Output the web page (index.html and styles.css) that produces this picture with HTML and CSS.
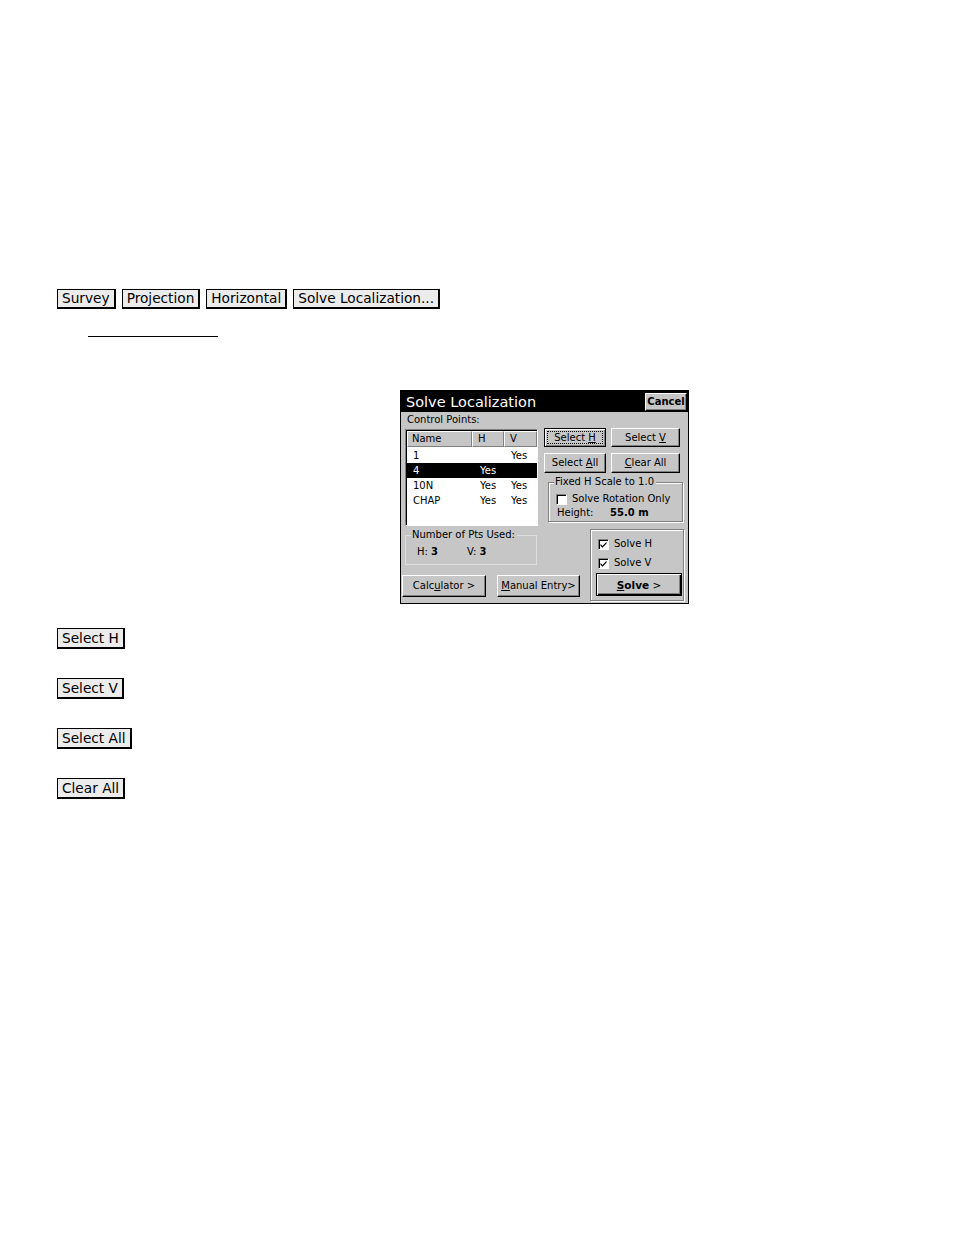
FILE: index.html
```html
<!DOCTYPE html>
<html>
<head>
<meta charset="utf-8">
<link rel="stylesheet" href="styles.css">
</head>
<body>
<div class="page">
  <div class="crumbs">
    <span class="crumb">Survey</span>
    <span class="crumb">Projection</span>
    <span class="crumb">Horizontal</span>
    <span class="crumb">Solve Localization...</span>
  </div>
  <div class="rule"></div>

  <div class="dialog">
    <div class="titlebar">
      <span class="title">Solve Localization</span>
      <span class="cancel">Cancel</span>
    </div>
    <div class="top">
      <div class="leftcol">
        <div class="lbl">Control Points:</div>
        <div class="list">
          <div class="lhead">
            <span class="hc c1">Name</span><span class="hc c2">H</span><span class="hc c3">V</span>
          </div>
          <div class="lrow"><span class="rc c1">1</span><span class="rc c2"></span><span class="rc c3">Yes</span></div>
          <div class="lrow sel"><span class="rc c1">4</span><span class="rc c2">Yes</span><span class="rc c3"></span></div>
          <div class="lrow"><span class="rc c1">10N</span><span class="rc c2">Yes</span><span class="rc c3">Yes</span></div>
          <div class="lrow"><span class="rc c1">CHAP</span><span class="rc c2">Yes</span><span class="rc c3">Yes</span></div>
        </div>
      </div>
      <div class="rightcol">
        <div class="btnrow r1">
          <span class="wb focus w62"><span class="dots"><span>Select <u>H</u></span></span></span>
          <span class="wb w69"><span>Select <u>V</u></span></span>
        </div>
        <div class="btnrow r2">
          <span class="wb w62"><span>Select <u>A</u>ll</span></span>
          <span class="wb w69"><span><u>C</u>lear All</span></span>
        </div>
        <div class="group g-fixed">
          <span class="glabel">Fixed H Scale to 1.0</span>
          <div class="chkline"><span class="chk"></span><span>Solve Rotation Only</span></div>
          <div class="hline"><span class="hl">Height:</span><b>55.0 m</b></div>
        </div>
      </div>
    </div>
    <div class="bottom">
      <div class="bleft">
        <div class="group g-num">
          <span class="glabel">Number of Pts Used:</span>
          <div class="counts"><span class="ch">H: <b>3</b></span><span>V: <b>3</b></span></div>
        </div>
        <div class="brow">
          <span class="wb w84"><span>Calc<u>u</u>lator &gt;</span></span>
          <span class="wb w83"><span><u>M</u>anual Entry&gt;</span></span>
        </div>
      </div>
      <div class="group g-solve">
        <div class="chkline s1"><span class="chk on"><svg viewBox="0 0 9 9" width="9" height="9"><path d="M1.5 4 L3.5 6 L7.5 1.8 L7.5 3.6 L3.5 7.8 L1.5 5.8 Z" fill="#000"/></svg></span><span>Solve H</span></div>
        <div class="chkline s2"><span class="chk on"><svg viewBox="0 0 9 9" width="9" height="9"><path d="M1.5 4 L3.5 6 L7.5 1.8 L7.5 3.6 L3.5 7.8 L1.5 5.8 Z" fill="#000"/></svg></span><span>Solve V</span></div>
        <span class="wb def"><span><b><u>S</u>olve</b>&nbsp;&gt;</span></span>
      </div>
    </div>
  </div>

  <div class="keys">
    <span class="crumb">Select H</span>
    <span class="crumb">Select V</span>
    <span class="crumb">Select All</span>
    <span class="crumb">Clear All</span>
  </div>
</div>
</body>
</html>
```

FILE: styles.css
```css
* { box-sizing: border-box; }
html, body { margin: 0; padding: 0; background: #fff; }
body { font-family: "DejaVu Sans", sans-serif; color: #000; }
.page { width: 954px; height: 1235px; padding-top: 289px; }

.crumbs { display: flex; gap: 6px; margin-left: 57px; }
.crumb {
  display: inline-block;
  height: 20px;
  line-height: 17px;
  font-size: 13.7px;
  padding: 0 4px 0 4px;
  background: #ececec;
  border: 1px solid #000;
  border-right-width: 2px;
  border-bottom-width: 2px;
  white-space: nowrap;
}
.rule { width: 130px; margin: 27px 0 0 88px; border-top: 1px solid #000; }

/* dialog */
.dialog {
  margin: 53px 0 0 400px;
  width: 289px;
  height: 214px;
  background: #c6c6c6;
  border: 1px solid #000;
  font-size: 10px;
  line-height: 12px;
}
.titlebar {
  height: 21px;
  background: #000;
  display: flex;
  align-items: center;
  justify-content: space-between;
  padding: 0 1px 0 5px;
}
.title { color: #fff; font-size: 14.5px; line-height: 18px; }
.cancel {
  width: 42px; height: 18px;
  background: #c6c6c6;
  font-weight: bold; font-size: 10px; line-height: 15px;
  text-align: center;
  border: 1px solid; border-color: #fff #000 #000 #fff;
  box-shadow: inset -1px -1px 0 #808080;
}

.top { display: flex; height: 114px; padding-left: 4px; }
.leftcol { width: 133px; }
.lbl { height: 17px; padding: 2px 0 0 2px; }
.list {
  height: 97px;
  background: #fff;
  border: 1px solid; border-color: #808080 #fff #fff #808080;
  box-shadow: inset 1px 1px 0 #000;
  padding: 1px 0 0 1px;
}
.lhead { display: flex; height: 16px; background: #c6c6c6; margin-bottom: 1px; }
.hc {
  height: 16px; line-height: 14px;
  border: 1px solid; border-color: #fff #808080 #808080 #fff;
  padding-left: 4px;
}
.lhead .c1 { width: 65px; }
.lhead .c2 { width: 32px; padding-left: 5px; }
.lhead .c3 { width: 33px; padding-left: 5px; }
.lrow { display: flex; height: 15px; line-height: 15px; }
.lrow.sel { background: #000; color: #fff; }
.rc.c1 { width: 65px; padding-left: 6px; }
.rc.c2 { width: 32px; padding-left: 8px; }
.rc.c3 { width: 33px; padding-left: 7px; }

.rightcol { width: 140px; margin-left: 6px; padding-top: 16px; }
.btnrow { display: flex; gap: 5px; }
.r1 { height: 19px; }
.r2 { height: 20px; margin-top: 6px; }
.wb {
  display: inline-flex; align-items: center; justify-content: center;
  height: 100%;
  background: #c6c6c6;
  border: 1px solid; border-color: #fff #000 #000 #fff;
  box-shadow: inset -1px -1px 0 #808080;
  white-space: nowrap;
}
.wb.focus { border-color: #000; box-shadow: inset 1px 1px 0 #fff, inset -1px -1px 0 #808080; padding: 2px; }
.dots { display: flex; align-items: center; justify-content: center; width: 100%; height: 100%; border: 1px dotted #000; }
.w62 { width: 62px; }
.w69 { width: 69px; }
.w84 { width: 84px; }
.w83 { width: 83px; }

.group {
  border: 1px solid #808080;
  box-shadow: 1px 1px 0 #fff, inset 1px 1px 0 #fff;
}
.glabel {
  display: inline-block;
  background: #c6c6c6;
  margin: -7px 0 0 5px;
  padding: 0 2px 0 1px;
  height: 12px;
  vertical-align: top;
}
.g-fixed { margin: 9px 0 0 4px; width: 135px; height: 40px; }
.chkline { display: flex; align-items: center; gap: 5px; }
.g-fixed .chkline { margin: -2px 0 0 7px; height: 12px; }
.chk {
  width: 11px; height: 11px; background: #fff;
  border: 1px solid; border-color: #808080 #fff #fff #808080;
  box-shadow: inset 1px 1px 0 #000;
  display: inline-flex; align-items: center; justify-content: center;
}
.hline { margin: 2px 0 0 8px; display: flex; }
.hl { width: 53px; }

.bottom { display: flex; padding-left: 1px; }
.bleft { width: 179px; }
.g-num {
  margin: 9px 0 0 3px; width: 132px; height: 30px;
  border-color: #dedede; box-shadow: none;
}
.counts { display: flex; margin: -2px 0 0 11px; }
.ch { width: 50px; }
.brow { display: flex; gap: 11px; margin-top: 10px; height: 22px; }
.g-solve { margin: 3px 0 0 9px; width: 94px; height: 72px; padding: 8px 0 0 7px; }
.g-solve .chkline { height: 12px; }
.s2 { margin-top: 7px; }
.wb.def {
  width: 86px; height: 23px; margin: 4px 0 0 -2px;
  border: 1px solid #000;
  box-shadow: inset 1px 1px 0 #fff, inset -1px -1px 0 #000, inset -2px -2px 0 #808080;
  font-size: 10.5px;
}

.keys { display: flex; flex-direction: column; align-items: flex-start; gap: 29px; margin: 24px 0 0 57px; }
.keys .crumb { height: 21px; line-height: 18px; }
```
